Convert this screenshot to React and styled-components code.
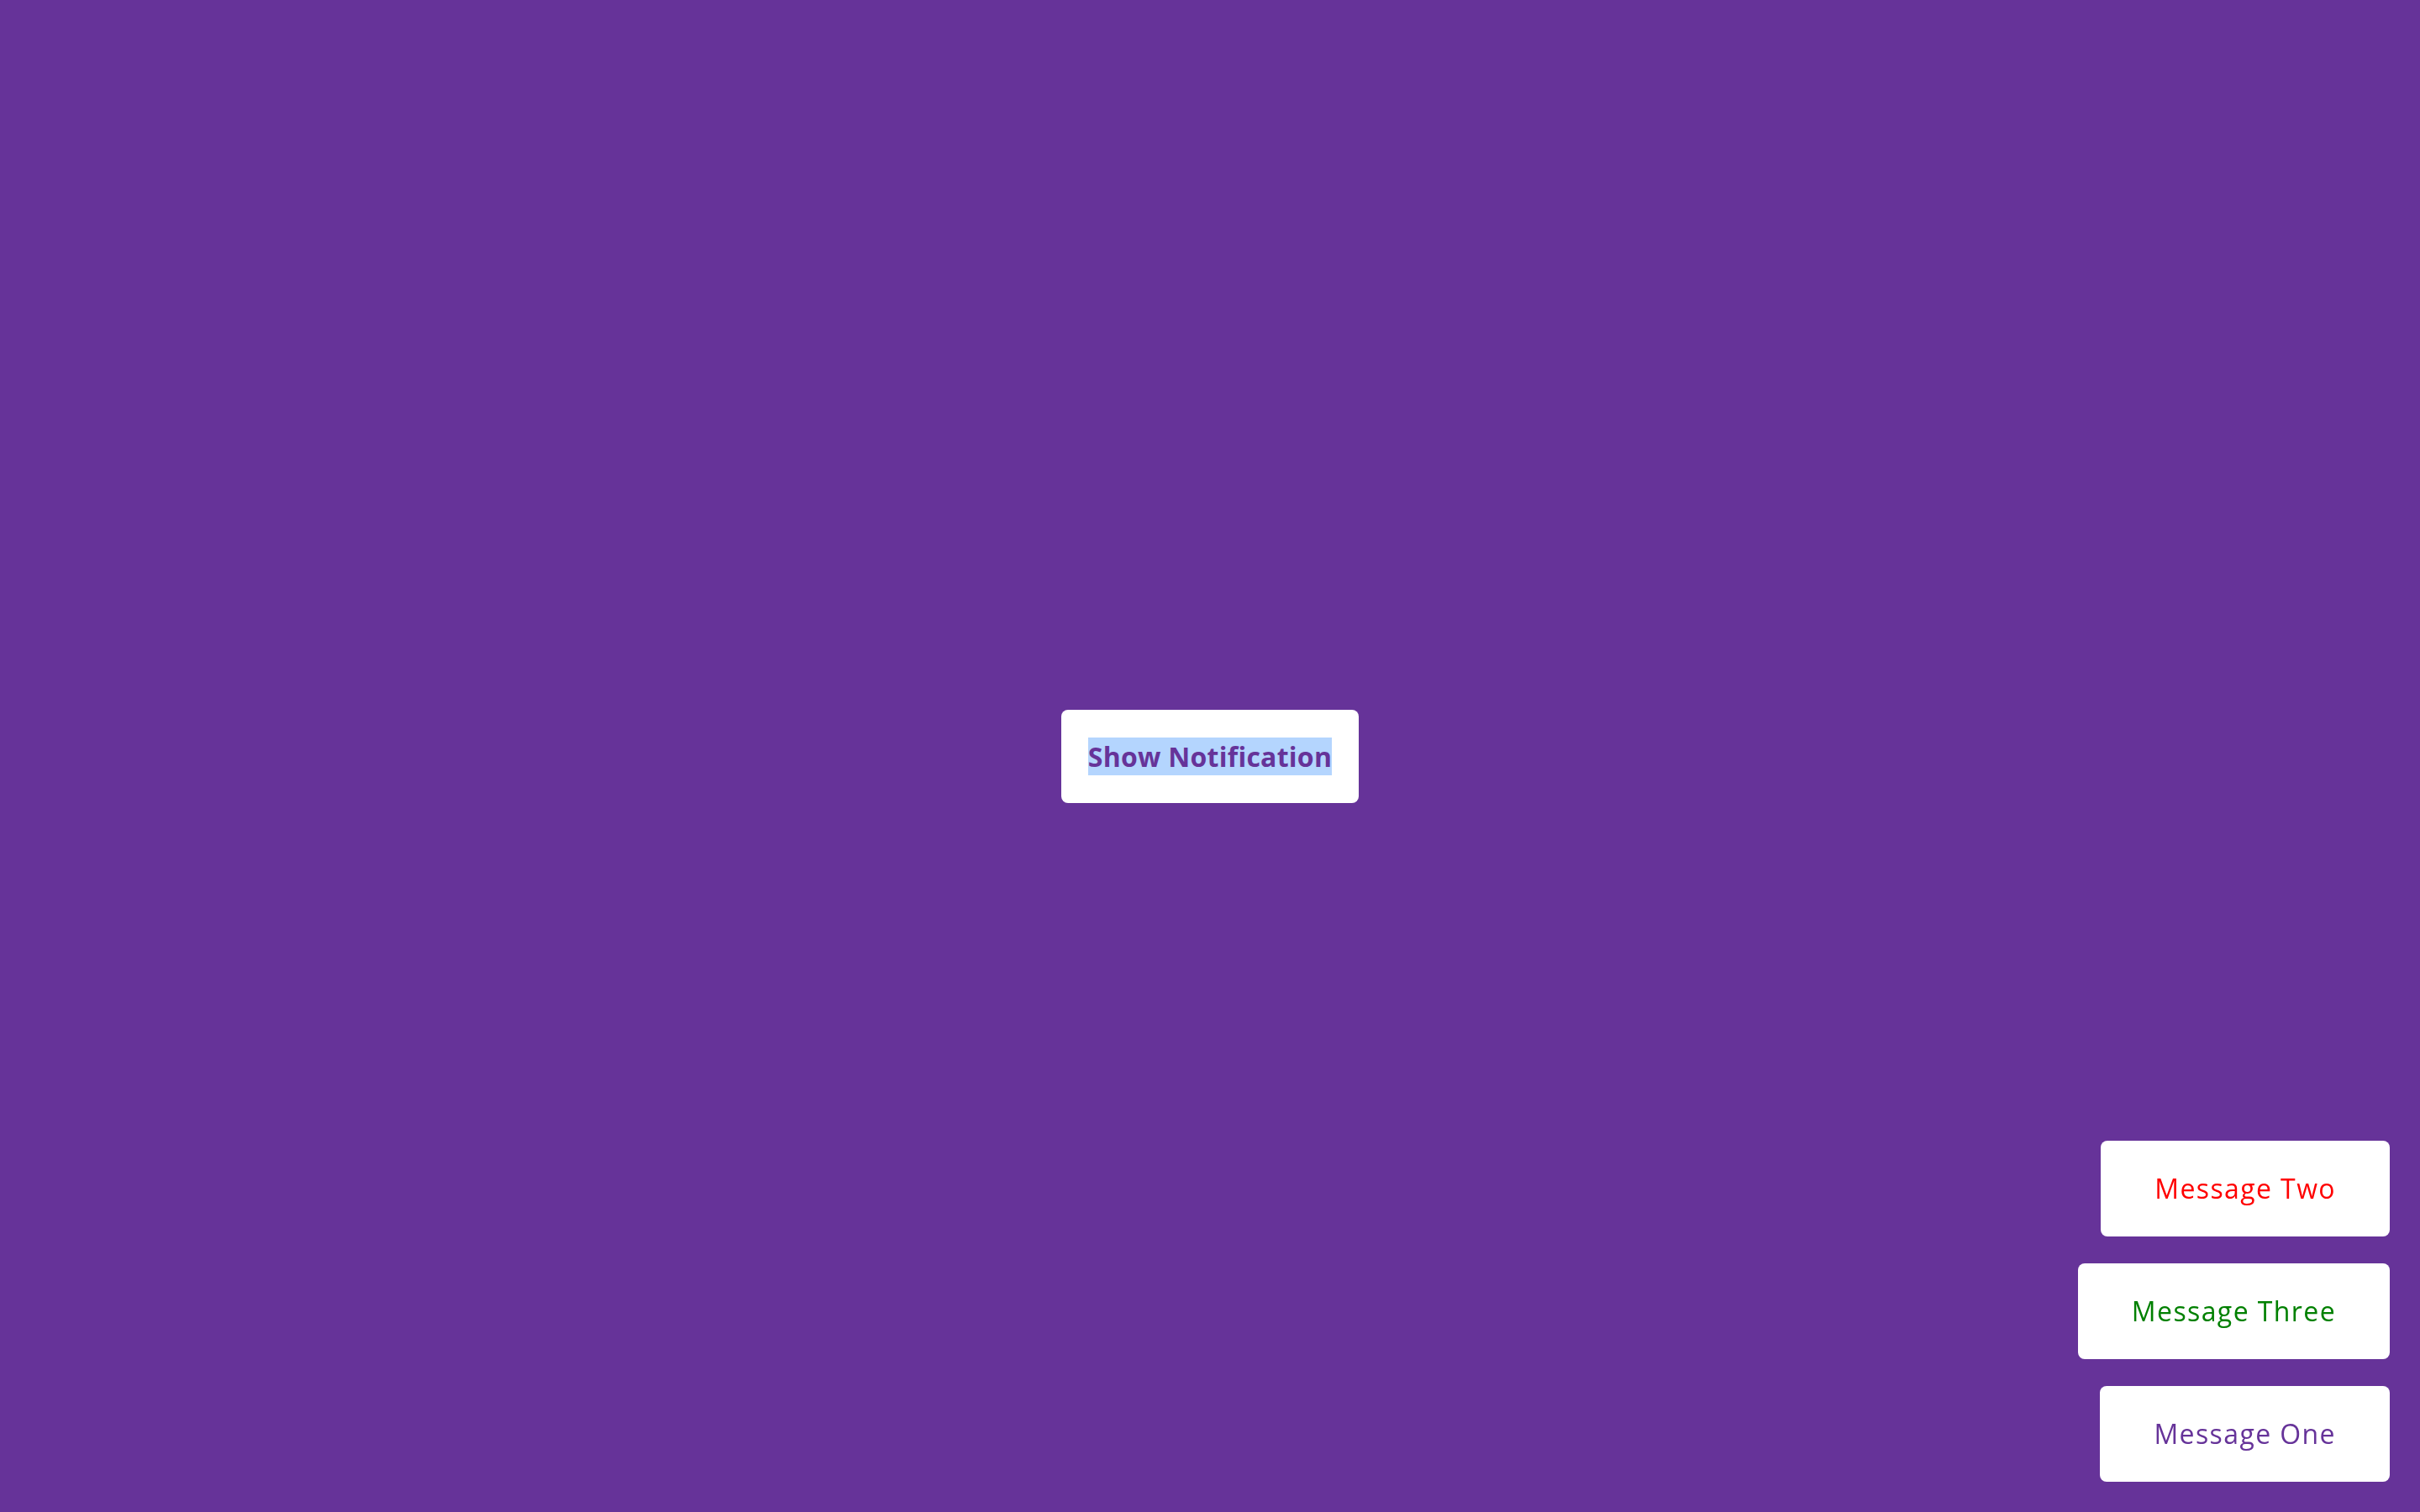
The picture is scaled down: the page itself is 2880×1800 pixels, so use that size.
import React from "react";
import styled, { createGlobalStyle } from "styled-components";

const GlobalStyle = createGlobalStyle`
  html, body {
    margin: 0;
    padding: 0;
    height: 100%;
  }
  body {
    background: #663399;
    font-family: "Open Sans", "Liberation Sans", sans-serif;
  }
  #root {
    height: 100%;
  }
`;

const Page = styled.main`
  width: 100%;
  height: 100vh;
  display: flex;
  align-items: center;
  justify-content: center;
  background: #663399;
`;

const TriggerButton = styled.button`
  display: flex;
  align-items: center;
  justify-content: center;
  background: #ffffff;
  border: none;
  border-radius: 8px;
  padding: 33px 32px;
  font-family: "Open Sans", "Liberation Sans", sans-serif;
  font-weight: 700;
  font-size: 32px;
  line-height: 48px;
  letter-spacing: 0.25px;
  color: #663399;
  cursor: pointer;
`;

const Selected = styled.span`
  background: #b4d5fe;
  line-height: 45px;
  display: inline-block;
`;

const ToastStack = styled.div`
  position: fixed;
  right: 36px;
  bottom: 36px;
  display: flex;
  flex-direction: column;
  align-items: flex-end;
  gap: 32px;
`;

const Toast = styled.div`
  background: #ffffff;
  border-radius: 8px;
  padding: 33px 64px;
  font-family: "Open Sans", "Liberation Sans", sans-serif;
  font-weight: 400;
  font-size: 32px;
  line-height: 48px;
  letter-spacing: 1.4px;
  color: ${(p) => p.$color};
  white-space: nowrap;
`;

const toasts = [
  { id: 2, text: "Message Two", color: "#ff0000" },
  { id: 3, text: "Message Three", color: "#008000" },
  { id: 1, text: "Message One", color: "#663399" },
];

export default function App() {
  return (
    <>
      <GlobalStyle />
      <Page>
        <TriggerButton>
          <Selected>Show Notification</Selected>
        </TriggerButton>
      </Page>
      <ToastStack>
        {toasts.map((t) => (
          <Toast key={t.id} $color={t.color}>
            {t.text}
          </Toast>
        ))}
      </ToastStack>
    </>
  );
}
